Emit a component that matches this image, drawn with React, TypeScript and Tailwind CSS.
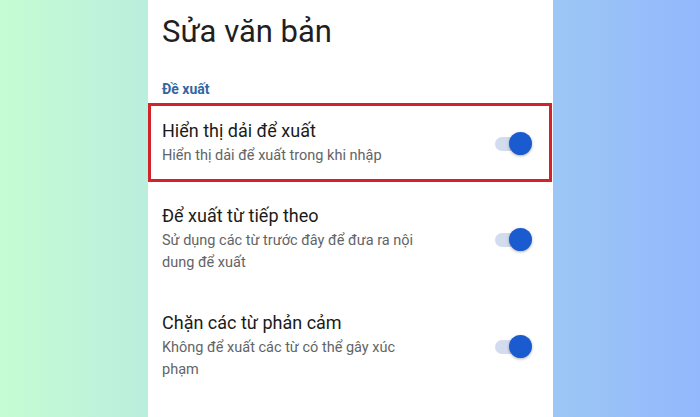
import React from "react";

type Item = { title: string; desc: string[]; on: boolean };

const items: Item[] = [
  { title: "Hiển thị dải để xuất", desc: ["Hiển thị dải để xuất trong khi nhập"], on: true },
  { title: "Để xuất từ tiếp theo", desc: ["Sử dụng các từ trước đây để đưa ra nội", "dung để xuất"], on: true },
  { title: "Chặn các từ phản cảm", desc: ["Không để xuất các từ có thể gây xúc", "phạm"], on: true },
];

function Toggle({ on }: { on: boolean }) {
  return (
    <div className="relative h-[23px] w-[37px] shrink-0">
      <div className={`absolute left-0 top-[5px] h-[14px] w-[30px] rounded-full ${on ? "bg-[#d3dbee]" : "bg-gray-300"}`} />
      <div className={`absolute top-0 h-[23px] w-[23px] rounded-full shadow-[0_1px_3px_rgba(0,0,0,0.3)] ${on ? "right-0 bg-[#1a5bcf]" : "left-0 bg-white"}`} />
    </div>
  );
}

export default function App() {
  return (
    <div className="h-[417px] w-[700px] overflow-hidden bg-gradient-to-r from-[#c6fcd3] to-[#93b8fc] font-['Roboto',sans-serif]">
      <div className="ml-[148px] h-full w-[405px] bg-white">
        <h1 className="pl-[14px] pt-[14px] text-[31px] leading-[36px] font-normal text-[#1f1f1f]">Sửa văn bản</h1>
        <div className="mt-[31px] mb-[6px] pl-[14px] text-[14px] leading-[16px] font-bold text-[#3166a3]">Đề xuất</div>

        {items.map((it, i) => (
          <div
            key={it.title}
            className={`mr-[1px] flex items-center justify-between border-[3px] pl-[11px] pr-[17px] ${
              i === 0 ? "border-[#d3222a] pt-[13px] pb-[12px]" : "border-transparent pt-[19px] pb-[12px]"
            }`}
          >
            <div>
              <div className="text-[18px] leading-[24px] font-normal text-[#1b1b1b]">{it.title}</div>
              <div className="mt-[2px] text-[14.5px] leading-[22px] text-[#626466]">
                {it.desc.map((line) => (
                  <div key={line} className="whitespace-nowrap">{line}</div>
                ))}
              </div>
            </div>
            <Toggle on={it.on} />
          </div>
        ))}
      </div>
    </div>
  );
}
